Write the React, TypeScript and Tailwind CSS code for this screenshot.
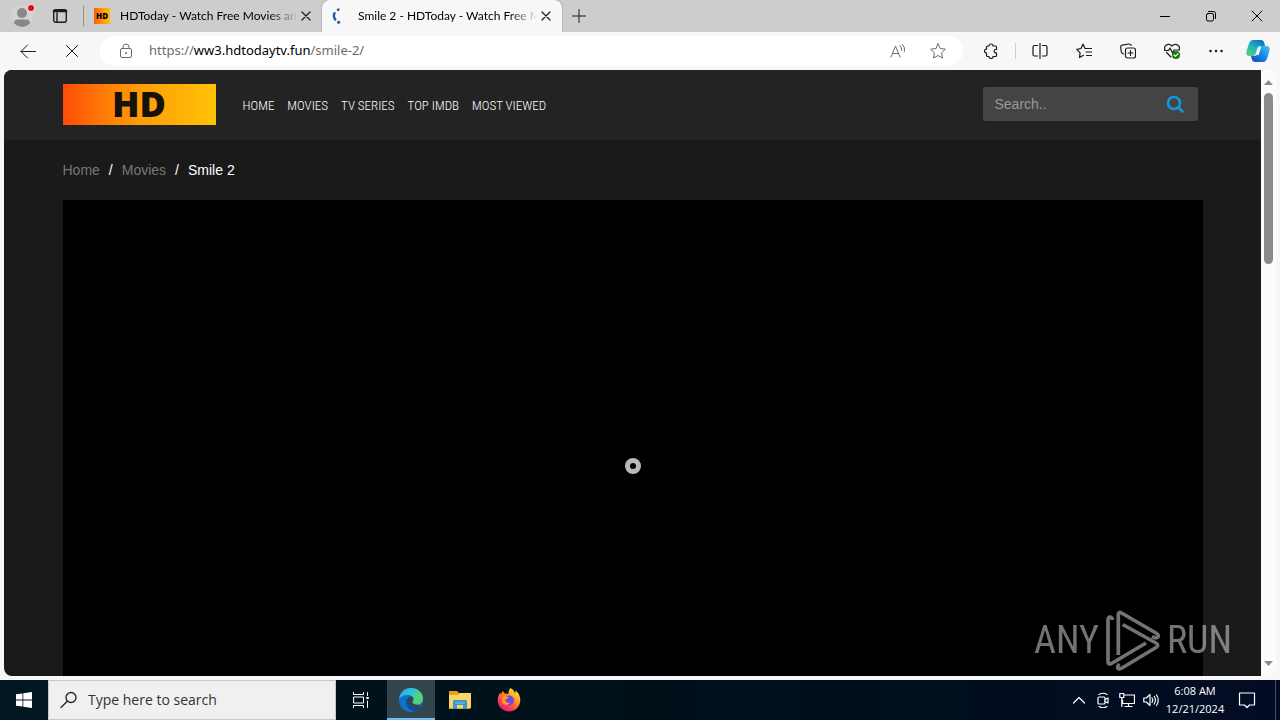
import type { ReactNode } from "react";

const NAV_LINKS = ["Home", "Movies", "TV Series", "Top IMDb", "Most Viewed"];

function Icon({ size = 16, width = 1, className = "", children }: { size?: number; width?: number; className?: string; children: ReactNode }) {
    return (
        <svg
            width={size}
            height={size}
            viewBox={`0 0 ${size} ${size}`}
            fill="none"
            stroke="currentColor"
            strokeWidth={width}
            strokeLinecap="round"
            strokeLinejoin="round"
            className={`shrink-0 ${className}`}
            aria-hidden="true"
        >
            {children}
        </svg>
    );
}

function CloseIcon() {
    return (
        <Icon width={1.2}>
            <path d="M4 4l8 8M12 4l-8 8" />
        </Icon>
    );
}

function Tab({ title, active, children }: { title: string; active?: boolean; children: ReactNode }) {
    return (
        <div className={`flex h-full items-center gap-2.5 pl-2.5 pr-2 ${active ? "w-[240px] rounded-t-lg bg-[#f7f7f7] shadow-[0_0_2px_#888]" : "w-[238px]"}`}>
            {children}
            <div className="flex min-w-0 flex-1 items-center">
                <span className="min-w-0 flex-1 whitespace-nowrap text-black [mask-image:linear-gradient(to_right,black_84%,transparent)]">
                    {title}
                </span>
                <button aria-label={`Close ${title}`}>
                    <CloseIcon />
                </button>
            </div>
        </div>
    );
}

function TabStrip() {
    return (
        <div className="flex h-8 items-center bg-[#cdcdcd] font-['Lato','Open_Sans',sans-serif] text-xs text-[#1b1b1b]">
            <button aria-label="Profile" className="flex w-11 justify-center">
                <svg width="26" height="26" viewBox="0 0 26 26" className="ml-1">
                    <circle cx="11" cy="13" r="11" fill="#d3d3d3" />
                    <circle cx="11" cy="10" r="5" fill="#8b8786" />
                    <path d="M3 20.500Q3 16.500 6.500 16.500H15.500Q19 16.500 19 20.500Q15 24 11 24Q7 24 3 20.500Z" fill="#8b8786" />
                    <circle cx="20" cy="5" r="4" fill="#f0d5d5" />
                    <circle cx="20" cy="5" r="3" fill="#d90f1a" />
                </svg>
            </button>
            <button aria-label="Tab actions" className="flex w-8 justify-center">
                <Icon width={1.4}>
                    <rect x="1.700" y="1.700" width="12.600" height="12.600" rx="2" />
                    <path d="M2 3h12" strokeWidth="2.600" />
                    <path d="M5 5v9" />
                </Icon>
            </button>
            <div className="ml-[7px] h-5 w-px bg-[#8c9089]" />
            <Tab title="HDToday - Watch Free Movies an">
                <span className="flex size-4 shrink-0 items-center justify-center bg-linear-to-r from-[#ff5a12] to-[#ffc107] font-['Open_Sans',sans-serif] text-[8px] font-extrabold text-black">
                    HD
                </span>
            </Tab>
            <Tab title="Smile 2 - HDToday - Watch Free M" active>
                <Icon className="text-[#245b9c]" width={2.4}>
                    <path d="M6.500 1.500l-.5.300M2.500 5.200Q1 8.500 3.200 11.500" />
                    <path d="M6.500 14.200h.2" strokeWidth="3" />
                </Icon>
            </Tab>
            <button aria-label="New tab" className="ml-px flex w-8 justify-center">
                <Icon>
                    <path d="M8 1.500v13M1.500 8h13" />
                </Icon>
            </button>
            <div className="ml-auto flex text-black">
                <button aria-label="Minimize" className="flex w-[46px] justify-center">
                    <Icon>
                        <path d="M3.500 8.500h9" />
                    </Icon>
                </button>
                <button aria-label="Restore" className="flex w-[46px] justify-center">
                    <Icon>
                        <rect x="3.500" y="5.500" width="7" height="7.500" rx="1.500" />
                        <path d="M5.500 3.500h5a2 2 0 0 1 2 2v5" />
                    </Icon>
                </button>
                <button aria-label="Close window" className="flex w-[46px] justify-center">
                    <Icon>
                        <path d="M3 3l10 10M13 3L3 13" />
                    </Icon>
                </button>
            </div>
        </div>
    );
}

function ToolButton({ label, children }: { label: string; children: ReactNode }) {
    return (
        <button aria-label={label} className="flex h-full w-11 shrink-0 items-center justify-center">
            {children}
        </button>
    );
}

function Toolbar() {
    return (
        <div className="flex h-[38px] items-center bg-[#f7f7f7] pl-1.5 text-[#1b1b1b]">
            <ToolButton label="Back">
                <Icon>
                    <path d="M15.500 8.500H1M7.500 2L1 8.500l6.500 6.500" />
                </Icon>
            </ToolButton>
            <ToolButton label="Stop">
                <Icon>
                    <path d="M2.500 2.500l11 11M13.500 2.500l-11 11" />
                </Icon>
            </ToolButton>
            <div className="mx-1.5 flex h-[30px] flex-1 items-center rounded-full bg-white pl-[18px] text-[#6b6b6b]">
                <Icon>
                    <rect x="2.500" y="5.500" width="11" height="9" rx="1.500" />
                    <path d="M5 5.500V4a3 3 0 0 1 6 0v1.500" />
                    <path d="M8 10v.1" strokeWidth="2" />
                </Icon>
                <div className="ml-[15px] flex-1 whitespace-nowrap font-['Noto_Sans',sans-serif] text-[13px]">
                    https://<span className="text-black">ww3.hdtodaytv.fun</span>/smile-2/
                </div>
                <button aria-label="Read aloud" className="flex w-10 justify-center">
                    <Icon>
                        <path d="M1 14L5.500 3 10 14M2.700 10.500h5.700M10 2.500q2 2 1.500 5M12.500 1.500q3 3 2 7" />
                    </Icon>
                </button>
                <button aria-label="Add to favorites" className="mr-[5px] flex w-10 justify-center">
                    <Icon>
                        <path d="M8 .8l2.200 4.700 5.100.7-3.700 3.600.9 5.200L8 12.500 3.500 15l.9-5.200L.7 6.200l5.100-.7z" />
                    </Icon>
                </button>
            </div>
            <ToolButton label="Extensions">
                <Icon width={1.2}>
                    <path d="M4.500 3H6a2 2 0 0 1 4 0h2.500a1 1 0 0 1 1 1v2.500h-.7a1.700 1.700 0 0 0 0 3.400h.7v2.600a1 1 0 0 1-1 1H10a2 2 0 0 1-4 0H4.500a1 1 0 0 1-1-1v-2.400a2 2 0 0 1 0-4V4a1 1 0 0 1 1-1z" />
                </Icon>
            </ToolButton>
            <div className="mx-0.5 h-4 w-px bg-[#cfcfcf]" />
            <ToolButton label="Split screen">
                <Icon width={1.2}>
                    <path d="M8 .5v15M5.500 2.500h-3a1.500 1.500 0 0 0-1.500 1.500v7.500a1.500 1.500 0 0 0 1.500 1.500h3M10.500 2.500h3a1.500 1.500 0 0 1 1.500 1.500v7.500a1.500 1.500 0 0 1-1.500 1.500h-3" />
                </Icon>
            </ToolButton>
            <ToolButton label="Favorites">
                <Icon width={1.2}>
                    <path d="M7.500 12.300L3.500 14.500l.6-4.600L.8 6.300l4.200-.8L7 1l2 4.500h6.500M10 9h5.500M10.500 12.500h5" />
                </Icon>
            </ToolButton>
            <ToolButton label="Collections">
                <Icon width={1.2}>
                    <path d="M3.500 11Q1.500 10.500 1.200 8.500L.7 4Q.6 2.500 2.200 2.200L9 1q1.800-.1 2.200 1.500" />
                    <rect x="5.500" y="5" width="10" height="10" rx="2" />
                    <path d="M10.500 7.500v5M8 10h5" />
                </Icon>
            </ToolButton>
            <ToolButton label="Browser essentials">
                <Icon width={1.2}>
                    <path d="M1 7Q-.3 4 2 2.200 5.500 0 8 3q2.500-3 6-.8Q16.500 4 15 7M2.500 9.500l4.500 4.500" />
                    <path d="M.5 7.500h4L6 5l2.500 5L10 7h5" />
                    <circle cx="12" cy="12" r="4" fill="#107c10" stroke="none" />
                    <path d="M10 12l1.500 1.300 2.500-2.600" stroke="white" />
                </Icon>
            </ToolButton>
            <ToolButton label="Settings and more">
                <Icon width={2.4}>
                    <path d="M2.500 8h.1M8 8h.1M13.500 8h.1" />
                </Icon>
            </ToolButton>
            <button aria-label="Copilot" className="flex w-[42px] justify-center pr-0.5">
                <svg width="24" height="24" viewBox="0 0 24 24">
                    <defs>
                        <linearGradient id="copilotLeft" x1="0" y1="1" x2=".8" y2="0">
                            <stop offset="0" stopColor="#62d36f" />
                            <stop offset=".5" stopColor="#24b6b9" />
                            <stop offset="1" stopColor="#0870c8" />
                        </linearGradient>
                        <linearGradient id="copilotRight" x1="0" y1="1" x2="1" y2="0">
                            <stop offset="0" stopColor="#1746b5" />
                            <stop offset=".5" stopColor="#1585e8" />
                            <stop offset="1" stopColor="#52c6f2" />
                        </linearGradient>
                    </defs>
                    <path d="M7 1h8q2.500 0 3.300 3l.7 3h-5q-2 0-2.800 2.500L9.500 15Q8.800 17 6.500 17H3Q-.5 17 .5 12L3 4.500Q4.200 1 7 1z" fill="url(#copilotLeft)" />
                    <path d="M17 23H9q-2.500 0-3.300-3L5 17h3q2.500 0 3.200-2.500L13 9q.7-2 3-2h5q3.500 0 2.500 5L21 19.500Q19.800 23 17 23z" fill="url(#copilotRight)" />
                    <path d="M12.800 8h2.400l-2.600 8H10z" fill="#f7f7f7" />
                </svg>
            </button>
        </div>
    );
}

function SiteHeader() {
    return (
        <header className="bg-[#232323]">
            <div className="mx-auto flex h-[70px] w-full max-w-[1140px] items-center pr-[5px] pb-0.5">
                <a
                    href="#home"
                    className="flex h-[41px] w-[153px] items-center justify-center bg-linear-to-r from-[#ff4b07] via-[#ff9c06] to-[#ffc107] font-['Open_Sans',sans-serif] text-4xl font-extrabold text-[#15120b]"
                >
                    HD
                </a>
                <nav className="ml-[27px] flex gap-[13px] pt-1 font-['Roboto_Condensed','Liberation_Sans_Narrow',sans-serif] text-[13px] font-light uppercase text-white">
                    {NAV_LINKS.map((link) => (
                        <a key={link} href="#nav">
                            {link}
                        </a>
                    ))}
                </nav>
                <form className="ml-auto flex h-[34px] w-[215px] items-center rounded-xs bg-[#444] px-3">
                    <input
                        type="text"
                        aria-label="Search"
                        placeholder="Search.."
                        className="min-w-0 flex-1 text-sm text-white outline-none placeholder:text-[#999]"
                    />
                    <button type="button" aria-label="Search" className="text-[#1496dc]">
                        <Icon size={20} width={2.6}>
                            <circle cx="8" cy="9" r="6" />
                            <path d="M12.500 13.500l4 4" />
                        </Icon>
                    </button>
                </form>
            </div>
        </header>
    );
}

function Page() {
    return (
        <div className="flex min-h-0 flex-1 flex-col overflow-hidden rounded-l-lg bg-[#1a1a1a] font-['Liberation_Sans','Arial',sans-serif]">
            <SiteHeader />
            <main className="mx-auto w-full max-w-[1140px]">
                <div className="flex h-[60px] items-center gap-[9px] text-sm text-white">
                    <a href="#home" className="text-[#777]">Home</a>
                    <span>/</span>
                    <a href="#movies" className="text-[#777]">Movies</a>
                    <span>/</span>
                    <span>Smile 2</span>
                </div>
                <div className="flex h-[532px] items-center justify-center bg-black">
                    <div className="size-4 rounded-full border-5 border-[#b9b9b9]" />
                </div>
            </main>
        </div>
    );
}

function Scrollbar() {
    return (
        <div className="flex w-[15px] flex-col items-center rounded-r-lg bg-[#fcfcfc] py-2 text-[#8a8a8a]">
            <svg width="9" height="9" viewBox="0 0 9 9">
                <path d="M0 7L4.500 2 9 7z" fill="currentColor" />
            </svg>
            <div className="mt-1.5 h-[171px] w-[9px] rounded-full bg-[#8a8a8a]" />
            <svg width="9" height="9" viewBox="0 0 9 9" className="mt-auto">
                <path d="M0 2l4.500 5L9 2z" fill="currentColor" />
            </svg>
        </div>
    );
}

// sits on top of the recorded screen
function Watermark() {
    return (
        <div className="pointer-events-none absolute right-12 bottom-[49px] flex items-center gap-1.5 font-['Roboto_Condensed','Liberation_Sans_Narrow',sans-serif] text-[38px] text-white opacity-45">
            <span>ANY</span>
            <svg width="56" height="62" viewBox="0 0 56 62" fill="none" stroke="white" strokeWidth="3.700" strokeLinejoin="round">
                <path d="M7.500 11Q7 8 5 8Q3 8.500 3 11V52Q3 56 6.500 54.500L41 34" />
                <path d="M13.300 46V6Q13.300 2 16.500 4L51 24Q54 26 53 28Q51 30 47 27.500" />
                <path d="M17.700 15.500L51 34Q54.500 36 51 38.500L17 59Q13.500 61 12.500 58.500Q12.300 57 14.500 55" />
            </svg>
            <span>RUN</span>
        </div>
    );
}

function Taskbar() {
    return (
        <footer className="flex h-10 items-stretch bg-linear-to-r from-[#00171f] via-[#001019] to-[#030c24] text-white">
            <button aria-label="Start" className="flex w-12 items-center justify-center">
                <svg width="16" height="16" viewBox="0 0 16 16" fill="white">
                    <path d="M0 2.300L6.500 1.400V7.600H0zM7.300 1.300L16 0V7.600H7.300zM0 8.400H6.500V14.600L0 13.700zM7.300 8.400H16V16L7.300 14.700z" />
                </svg>
            </button>
            <label className="flex w-72 items-center gap-2.5 border border-[#c8c8c8] bg-[#f0f0f0] pl-[11px] text-[#222]">
                <Icon size={18} width={1.3}>
                    <circle cx="11" cy="6.500" r="5" />
                    <path d="M7.300 10.200L1 16.500" />
                </Icon>
                <input
                    type="text"
                    aria-label="Type here to search"
                    placeholder="Type here to search"
                    className="min-w-0 flex-1 text-sm outline-none placeholder:text-[#333]"
                />
            </label>
            <div className="flex gap-px">
                <button aria-label="Task view" className="flex w-[50px] items-center justify-center">
                    <Icon>
                        <path d="M.5 .5v2h10v-2M.5 15.500v-2h10v2M1 5h9.500v6H1zM14.500 .5v3M14.500 9v6.500" />
                        <path d="M14 6h1" strokeWidth="2" />
                    </Icon>
                </button>
                <button aria-label="Microsoft Edge" className="flex w-12 items-center justify-center border-b-2 border-[#76b9ed] bg-[#33454d] pt-0.5">
                    <svg width="24" height="24" viewBox="0 0 24 24">
                        <defs>
                            <linearGradient id="edgeTop" x1="0" y1="0" x2="1" y2=".5">
                                <stop offset="0" stopColor="#2aa9e0" />
                                <stop offset=".5" stopColor="#2fc3d5" />
                                <stop offset="1" stopColor="#66d855" />
                            </linearGradient>
                        </defs>
                        <circle cx="12" cy="12" r="12" fill="#0f74c9" />
                        <path d="M0 11.500C.5 4.800 5.500 0 12 0c7 0 12 5 12 10.200 0 4-3 6.300-6.300 6.300-3 0-4.200-1-4.200-2 0-.8 1-1.200 1-3C14.500 9 12 7 8.800 7 4.500 7 1 9 0 11.500z" fill="url(#edgeTop)" />
                        <path d="M8.500 9.500C6.500 11.500 6.300 14.500 8 18c1.600 3.200 5 5.500 8.500 5.100 2.200-1 4.300-2.700 5.600-4.900-5 2.700-13.500.6-13.600-8.700z" fill="#124b9c" />
                        <path d="M13.500 14.300c-.4-.8 1-1.300 1-3 0-2-1.300-2.800-2.800-2.800-2 0-3 2.200-2.700 4.200.6 4.500 5 7.300 9.500 6.500 1.500-.3 3.500-1 4-1.800l2-3V17l-1.500 1.500z" fill="#33454d" />
                        <path d="M14.500 11.300c0 1.700-1 2.200-1 3 0 1.200 1.500 2.200 4.200 2.200 3.300 0 6.300-2.300 6.300-6.300z" fill="#4dcf86" />
                    </svg>
                </button>
                <button aria-label="File Explorer" className="flex w-12 items-center justify-center">
                    <svg width="22" height="20" viewBox="0 0 22 20">
                        <path d="M0 1h8l2 2h11v16H0z" fill="#e8a317" />
                        <path d="M0 5h9l2-2h11v15H0z" fill="#f8d568" />
                        <path d="M4 19v-7.500q0-1.500 1.500-1.500h11q1.500 0 1.500 1.500V19h-4v-4H8v4z" fill="#3a96cf" />
                        <path d="M6 13h10" stroke="#76c3e8" />
                    </svg>
                </button>
                <button aria-label="Firefox" className="flex w-12 items-center justify-center">
                    <svg width="24" height="24" viewBox="0 0 24 24">
                        <defs>
                            <linearGradient id="fox" x1=".9" y1="0" x2=".2" y2="1">
                                <stop offset="0" stopColor="#fff44f" />
                                <stop offset=".4" stopColor="#ff9a1f" />
                                <stop offset=".75" stopColor="#ff3750" />
                                <stop offset="1" stopColor="#e31587" />
                            </linearGradient>
                        </defs>
                        <path d="M13.500 0c3 1.500 4 4 4.500 5 .5-.5.700-1.500.5-2.500 3 2 5 6 4.800 10C23 19 18 23.500 12 23.500S.7 18.800.7 12.300C.7 9 1.800 6.500 3.300 4.500l.5 2L6 2.500c0 1.500 1.200 3 2.500 3.300h3C11.500 3.500 12 1.500 13.500 0z" fill="url(#fox)" />
                        <circle cx="12" cy="12.500" r="5" fill="#7542e5" />
                        <path d="M5 9c2-2 5-1 7 .5-1 1.500-3 1-3.500 2.200-.5 2 2 3.800 4.500 2.800-1.500 3.500-6.500 3-8-.5z" fill="#ff9823" />
                    </svg>
                </button>
            </div>
            <div className="ml-auto flex items-center">
                <button aria-label="Show hidden icons" className="flex w-6 justify-center">
                    <Icon width={1.2}>
                        <path d="M2.500 11L8 5.500l5.500 5.500" />
                    </Icon>
                </button>
                <button aria-label="Camera" className="flex w-6 justify-center">
                    <Icon width={1.2}>
                        <rect x="3" y="5" width="7" height="7" rx="1" />
                        <path d="M10 7.500l3-1.500v5l-3-1.500M4 2.500Q8 0 12 2.500M4 14.500Q8 17 12 14.500" />
                    </Icon>
                </button>
                <button aria-label="Network" className="flex w-6 justify-center">
                    <Icon width={1.2}>
                        <path d="M5.500 3h10v8.500h-12V8M9.500 11.500v3M6 14.500h7M.8 1.500h4v4h-4zM2.800 5.500v9" />
                    </Icon>
                </button>
                <button aria-label="Volume" className="flex w-6 justify-center">
                    <Icon width={1.2}>
                        <path d="M.8 6h2.500L7 2.500v11L3.300 10H.8zM9 6q1.500 2 0 4.500M11.200 4.500q2.500 3.500 0 7.500M13.500 3q3.500 5 0 10.500" />
                    </Icon>
                </button>
                <div className="w-16 text-center text-[11px] leading-[18px] whitespace-nowrap">
                    <div>6:08 AM</div>
                    <div>12/21/2024</div>
                </div>
                <button aria-label="Notifications" className="flex w-10 justify-center">
                    <Icon size={18} width={1.2}>
                        <path d="M1.500 2h15v12h-5L9 16.500 6.500 14h-5z" />
                    </Icon>
                </button>
                <div className="ml-2 h-full w-[5px] border-l border-[#46505c]" />
            </div>
        </footer>
    );
}

export default function App() {
    return (
        <div className="relative flex h-screen flex-col bg-[#f7f7f7] font-['Open_Sans','Noto_Sans',sans-serif]">
            <TabStrip />
            <Toolbar />
            <div className="mx-1 mb-1 flex min-h-0 flex-1">
                <Page />
                <Scrollbar />
            </div>
            <Taskbar />
            <Watermark />
        </div>
    );
}
